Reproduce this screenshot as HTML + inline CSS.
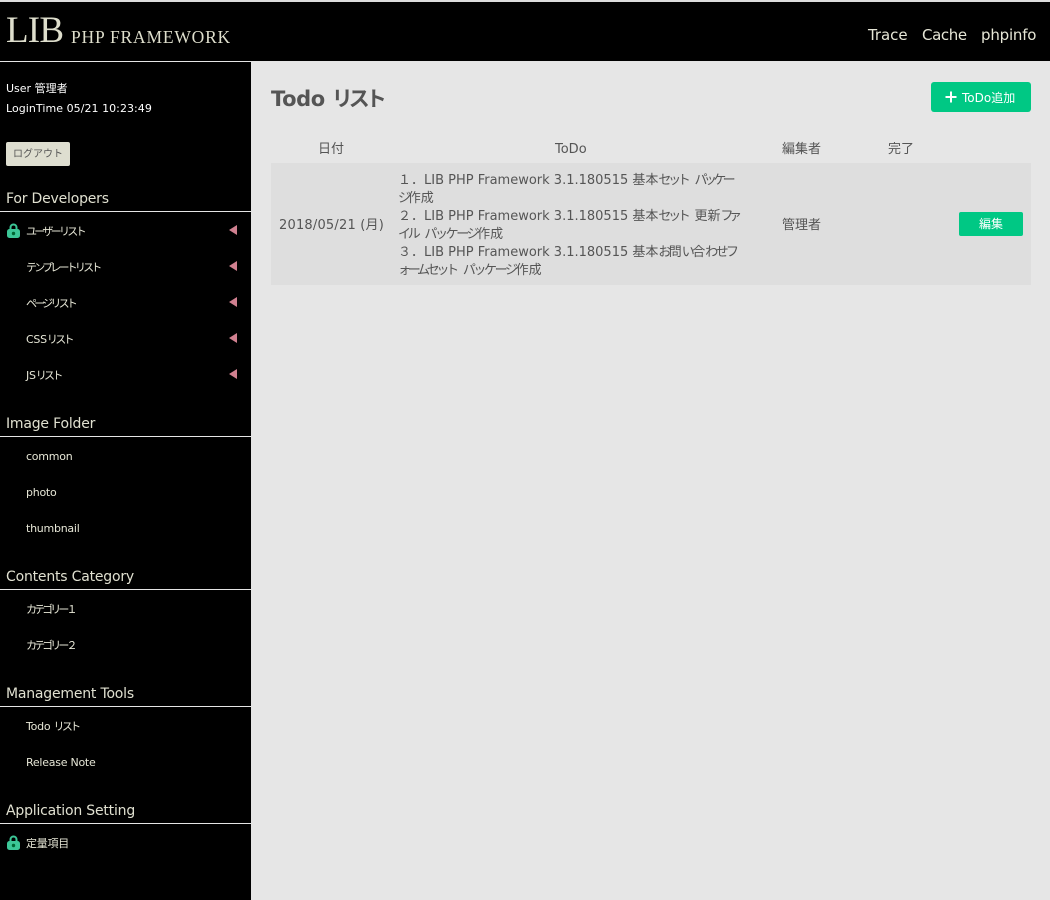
<!DOCTYPE html>
<html lang="ja"><head><meta charset="utf-8"><title>Todo リスト</title>
<style>
*{box-sizing:border-box}
html,body{margin:0;padding:0;width:1050px;height:900px;overflow:hidden;background:#e6e6e6}
body{position:relative;font-family:"DejaVu Sans","Noto Sans CJK JP",sans-serif;color:#555}
.a{position:absolute;white-space:nowrap;line-height:18px}
.nav{font-size:11px;color:#e6e6d6;letter-spacing:-.25px;left:26px}
.nav i{font-style:normal;letter-spacing:-2.7px}
.sec{font-size:14px;color:#e0e0d0;left:6px;letter-spacing:-.2px}
.ln{position:absolute;left:0;width:251px;height:1px;background:#e5e5e5}
.tri{position:absolute;left:229px;width:0;height:0;border-top:5px solid transparent;border-bottom:5px solid transparent;border-right:8px solid #d08090}
.lock{position:absolute;left:7px}
.th{font-size:13px;color:#555}
.td{font-size:13px;color:#555}
.td i{font-style:normal;letter-spacing:-3.3px}
.td i.w{letter-spacing:-2.4px}
.td b{font-weight:normal;letter-spacing:-2.6px}
.td u{text-decoration:none;display:inline-block;width:7px}
</style></head><body>
<div class="a" style="left:0;top:0;width:1050px;height:62px;background:#000;border-top:2px solid #ddd;border-bottom:1px solid #e5e5e5"></div>
<div class="a" style="left:0;top:62px;width:251px;height:838px;background:#000"></div>
<div class="a" style="left:6px;top:11px;font:37px/40px 'Liberation Serif',serif;color:#dedecc;letter-spacing:-.8px">LIB</div>
<div class="a" style="left:71px;top:26px;font:17.5px/22px 'Liberation Serif',serif;color:#dedecc;letter-spacing:.8px">PHP FRAMEWORK</div>
<div class="a" style="left:868px;top:26px;font-size:15px;color:#e6e6d6;letter-spacing:-.05px">Trace</div>
<div class="a" style="left:922px;top:26px;font-size:15px;color:#e6e6d6;letter-spacing:-.4px">Cache</div>
<div class="a" style="left:981px;top:26px;font-size:15px;color:#e6e6d6;letter-spacing:-.2px">phpinfo</div>

<div class="a" style="left:6px;top:80px;font-size:11px;color:#fff">User 管理者</div>
<div class="a" style="left:6px;top:100px;font-size:11px;color:#fff;letter-spacing:.05px">LoginTime 05/21 10:23:49</div>
<div class="a" style="left:6px;top:142px;width:64px;height:24px;background:#deded0;border-radius:2px;font-size:10px;line-height:26px;text-align:center;color:#555">ログアウト</div>

<div class="a sec" style="top:190px">For Developers</div><div class="ln" style="top:211px"></div>
<svg class="lock" style="top:223px" width="13" height="15" viewBox="0 0 13 15"><path d="M3.500 7V4.500a3 3 0 0 1 6 0V7" fill="none" stroke="#3cc797" stroke-width="2"/><rect x="0" y="6" width="13" height="9" rx="2.500" fill="#3cc797"/><circle cx="6.500" cy="10.500" r="1.700" fill="#063"/></svg>
<div class="a nav" style="top:223px"><i>ユーザーリスト</i></div><div class="tri" style="top:225px"></div>
<div class="a nav" style="top:259px"><i style="letter-spacing:-2.8px">テンプレートリスト</i></div><div class="tri" style="top:261px"></div>
<div class="a nav" style="top:295px"><i style="letter-spacing:-2.800px">ページリスト</i></div><div class="tri" style="top:297px"></div>
<div class="a nav" style="top:331px">CSS<i>リスト</i></div><div class="tri" style="top:333px"></div>
<div class="a nav" style="top:367px">JS<i>リスト</i></div><div class="tri" style="top:369px"></div>

<div class="a sec" style="top:415px">Image Folder</div><div class="ln" style="top:436px"></div>
<div class="a nav" style="top:448px">common</div>
<div class="a nav" style="top:484px">photo</div>
<div class="a nav" style="top:520px">thumbnail</div>

<div class="a sec" style="top:568px">Contents Category</div><div class="ln" style="top:589px"></div>
<div class="a nav" style="top:601px"><i style="letter-spacing:-2.9px">カテゴリー１</i></div>
<div class="a nav" style="top:637px"><i style="letter-spacing:-2.9px">カテゴリー２</i></div>

<div class="a sec" style="top:685px">Management Tools</div><div class="ln" style="top:706px"></div>
<div class="a nav" style="top:718px">Todo <i>リスト</i></div>
<div class="a nav" style="top:754px">Release Note</div>

<div class="a sec" style="top:802px">Application Setting</div><div class="ln" style="top:823px"></div>
<svg class="lock" style="top:835px" width="13" height="15" viewBox="0 0 13 15"><path d="M3.500 7V4.500a3 3 0 0 1 6 0V7" fill="none" stroke="#3cc797" stroke-width="2"/><rect x="0" y="6" width="13" height="9" rx="2.500" fill="#3cc797"/><circle cx="6.500" cy="10.500" r="1.700" fill="#063"/></svg>
<div class="a nav" style="top:835px">定量項目</div>

<div class="a" style="left:271px;top:84px;font-size:21px;line-height:30px;font-weight:bold;color:#555;letter-spacing:-.4px">Todo <span style="letter-spacing:-4px">リスト</span></div>
<div class="a" style="left:931px;top:82px;width:100px;height:30px;background:#00c884;border-radius:3px"></div>
<svg class="a" style="left:945px;top:91px" width="12" height="12" viewBox="0 0 12 12"><path d="M6 0.500V11.500M0.500 6H11.500" stroke="#fff" stroke-width="2" fill="none"/></svg>
<div class="a" style="left:962px;top:89px;font-size:12px;color:#fff">ToDo追加</div>

<div class="a th" style="left:318px;top:141px">日付</div>
<div class="a th" style="left:555px;top:141px">ToDo</div>
<div class="a th" style="left:782px;top:141px">編集者</div>
<div class="a th" style="left:888px;top:141px">完了</div>

<div class="a" style="left:271px;top:163px;width:760px;height:122px;background:#dedede"></div>
<div class="a td" style="left:279px;top:217px;letter-spacing:.2px">2018/05/21 (月)</div>
<div class="a td" style="left:398px;top:172px">１．LIB PHP Framework 3.1.180515 基本<i>セット</i><u></u><i style="letter-spacing:-3.600px">パッケー</i><br><i>ジ</i>作成<br>２．LIB PHP Framework 3.1.180515 基本<i>セット</i><u></u>更新<span style="letter-spacing:-4.500px">ファ</span><br><i>イル</i><u></u><i class="w">パッケージ</i>作成<br>３．LIB PHP Framework 3.1.180515 基本<b>お</b>問<b>い</b>合<b>わせ</b><i>フ</i><br><i>ォームセット</i><u></u><i class="w">パッケージ</i>作成</div>
<div class="a td" style="left:782px;top:217px">管理者</div>
<div class="a" style="left:959px;top:212px;width:64px;height:24px;background:#00c884;border-radius:2px;font-size:12px;line-height:24px;text-align:center;color:#fff">編集</div>
</body></html>
